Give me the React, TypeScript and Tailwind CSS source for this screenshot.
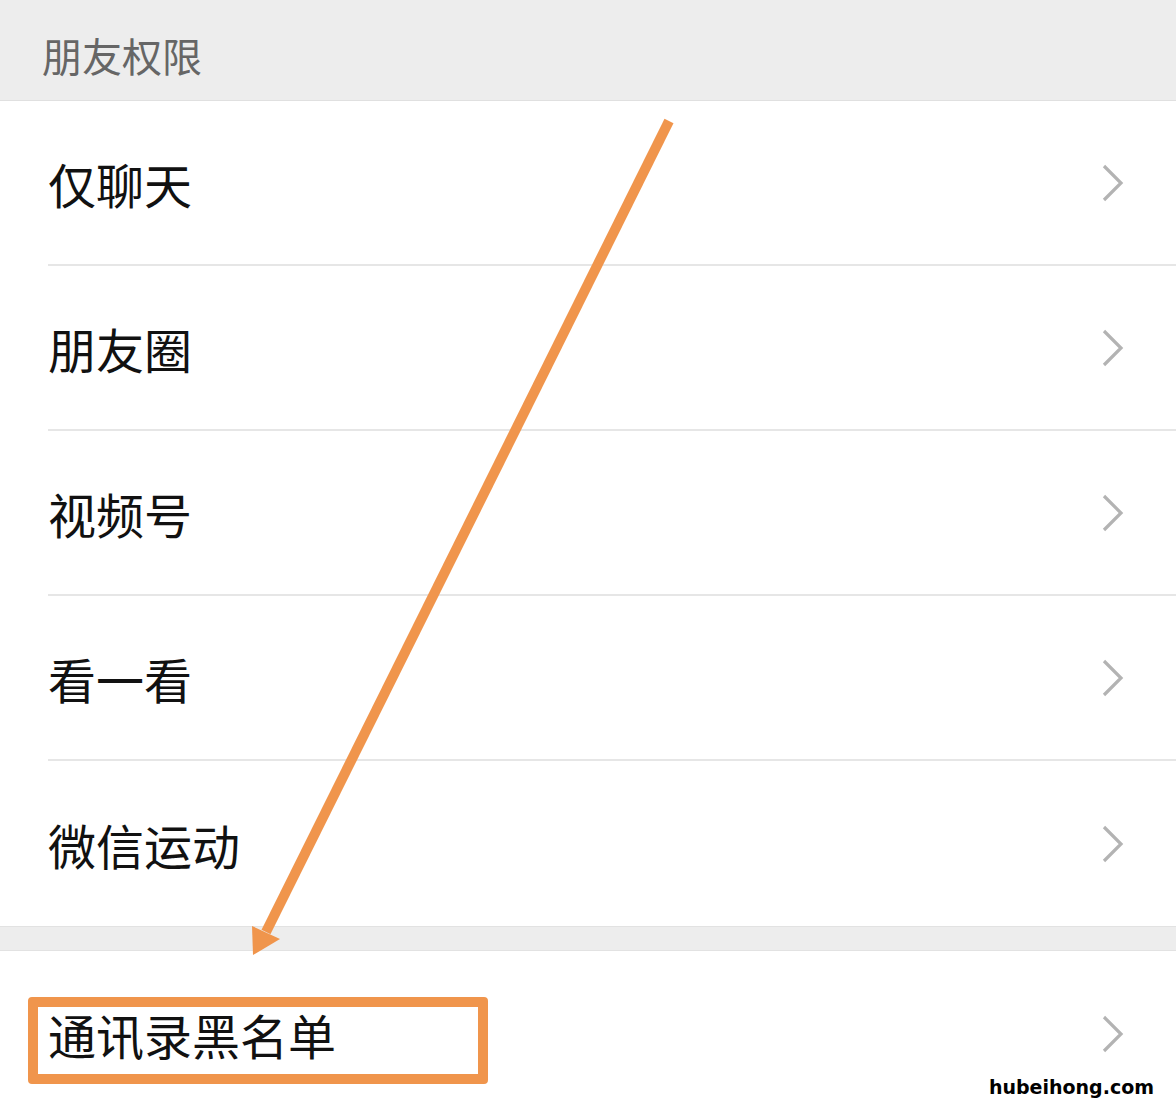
import React from 'react';

const rows = ['仅聊天', '朋友圈', '视频号', '看一看', '微信运动'];

function Chevron() {
  return (
    <svg width="24" height="40" viewBox="0 0 24 40" className="shrink-0">
      <path d="M4 3 L21 20 L4 37" fill="none" stroke="#b3b3b3" strokeWidth="3.2" />
    </svg>
  );
}

function Row({ label, last }: { label: string; last?: boolean }) {
  return (
    <div className="h-[165px] pl-[48px] flex">
      <div className={`flex-1 flex items-center justify-between pr-[52px] ${last ? '' : 'border-b-2 border-[#e6e6e6]'}`}>
        <span className="text-[48px] leading-none text-[#111]">{label}</span>
        <Chevron />
      </div>
    </div>
  );
}

export default function App() {
  return (
    <div
      className="relative w-[1176px] h-[1111px] overflow-hidden bg-white"
      style={{ fontFamily: '"Noto Sans CJK SC", "Noto Sans", sans-serif' }}
    >
      <div className="h-[101px] bg-[#ededed] pl-[42px] flex items-center border-b border-[#e0e0e0]">
        <span className="text-[40px] leading-none text-[#666] pt-[10px]">朋友权限</span>
      </div>
      <div>
        {rows.map((r, i) => (
          <Row key={r} label={r} last={i === rows.length - 1} />
        ))}
      </div>
      <div className="h-[25px] bg-[#ededed] border-y border-[#e2e2e2]" />
      <div className="h-[160px] pl-[48px] flex items-center justify-between pr-[52px] pt-[6px]">
        <span className="text-[48px] leading-none text-[#111]">通讯录黑名单</span>
        <Chevron />
      </div>

      {/* highlight box */}
      <div className="absolute left-[28px] top-[997px] w-[460px] h-[87px] border-[10px] border-[#f0954c] rounded-[4px]" />

      {/* arrow */}
      <svg className="absolute left-0 top-0 pointer-events-none" width="1176" height="1111">
        <line x1="669" y1="121" x2="266" y2="932" stroke="#f0954c" strokeWidth="10" />
        <polygon points="253,955 252,926 280,939" fill="#f0954c" />
      </svg>

      {/* watermark */}
      <div
        className="absolute right-[22px] bottom-[10px] text-[19px] font-bold text-black"
        style={{ fontFamily: '"DejaVu Sans", sans-serif' }}
      >
        hubeihong.com
      </div>
    </div>
  );
}
